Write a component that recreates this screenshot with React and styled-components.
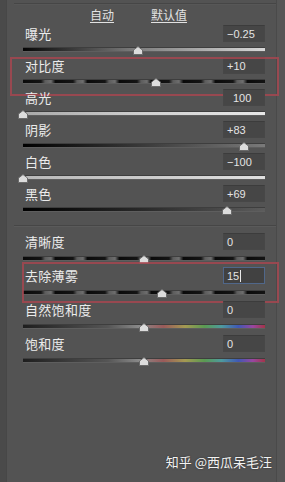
import React from "react";
import styled, { createGlobalStyle, css } from "styled-components";

const Global = createGlobalStyle`
  html, body { margin: 0; padding: 0; background: #535353; }
  body { font-family: "Noto Sans CJK SC", "Noto Sans", sans-serif; }
`;

const Panel = styled.div`
  position: relative;
  width: 285px;
  height: 482px;
  display: flex;
  background: #535353;
  overflow: hidden;
`;

const LeftEdge = styled.div`
  width: 6px;
  background: #4a4a4a;
  border-right: 1px solid #474747;
`;

const RightEdge = styled.div`
  width: 8px;
  background: #565656;
  border-left: 1px solid #4a4a4a;
`;

const Content = styled.div`
  flex: 1;
  display: flex;
  flex-direction: column;
  padding-top: 3px;
`;

const TopRule = styled.div`
  height: 1px;
  margin: 0 0 0 7px;
  background: #464646;
  border-bottom: 1px solid #575757;
`;

const Header = styled.div`
  height: 20px;
  display: flex;
  align-items: center;
  padding-left: 83px;
  gap: 37px;
`;

const HeaderLink = styled.span`
  font-size: 12px;
  line-height: 14px;
  color: #e2e2e2;
  text-decoration: underline;
  text-underline-offset: 2px;
`;

const Section = styled.div`
  display: flex;
  flex-direction: column;
`;

const Row = styled.div`
  position: relative;
  height: ${(p) => p.$h}px;
  padding: 0 11px 0 16px;
  display: flex;
  flex-direction: column;
  ${(p) =>
    p.$mark &&
    css`
      &::after {
        content: "";
        position: absolute;
        left: ${p.$mark.l}px;
        right: ${p.$mark.r}px;
        top: ${p.$mark.t}px;
        bottom: ${p.$mark.b}px;
        border: 2px solid rgba(170, 70, 80, 0.8);
        pointer-events: none;
      }
    `}
`;

const LabelLine = styled.div`
  height: 17px;
  display: flex;
  align-items: center;
  justify-content: space-between;
`;

const Label = styled.span`
  padding-left: 2px;
  font-size: 13px;
  line-height: 17px;
  color: #ebebeb;
  letter-spacing: 0.3px;
`;

const ValueBox = styled.div`
  box-sizing: border-box;
  width: 42px;
  height: 17px;
  padding-left: ${(p) => p.$indent || 3}px;
  display: flex;
  align-items: center;
  font-family: "Liberation Sans", Arial, sans-serif;
  font-size: 11px;
  color: #e4e4e4;
  background: ${(p) => (p.$focus ? "#414141" : "#464646")};
  border: 1px solid ${(p) => (p.$focus ? "#50678a" : "#474747")};
  border-top-color: ${(p) => (p.$focus ? "#50678a" : "#3c3c3c")};
`;

const Caret = styled.span`
  display: inline-block;
  width: 1px;
  height: 12px;
  margin-left: 1px;
  background: #e8e8e8;
`;

const SliderLine = styled.div`
  position: relative;
  flex: 1;
  padding-top: ${(p) => p.$offset}px;
`;

const trackBg = {
  exposure: "linear-gradient(to right, #050505 0%, #7a7a7a 45%, #d8d8d8 100%)",
  dashed:
    "repeating-linear-gradient(to right, #0a0a0a 0px, #141414 18px, #5c5c5c 22px, #6e6e6e 28px, #141414 32px)",
  highlights: "linear-gradient(to right, #a8a8a8 0%, #d0d0d0 50%, #e8e8e8 100%)",
  shadows: "linear-gradient(to right, #000 0%, #3a3a3a 50%, #7a7a7a 100%)",
  whites: "linear-gradient(to right, #b8b8b8 0%, #cfcfcf 60%, #e0e0e0 100%)",
  blacks: "linear-gradient(to right, #000 0%, #2a2a2a 50%, #5c5c5c 100%)",
  color:
    "linear-gradient(to right, #1e1e1e 0%, #555 35%, #8a8a8a 48%, #9a5a5a 58%, #a49a52 67%, #5a9a52 75%, #4e9a9e 82%, #4058b4 89%, #9a46a0 95%, #a33448 100%)",
};

const Track = styled.div`
  height: 3px;
  background: ${(p) => trackBg[p.$kind]};
  border-bottom: 1px solid #5e5e5e;
  box-shadow: 0 -1px 0 #3e3e3e;
`;

const Thumb = styled.svg`
  position: absolute;
  top: ${(p) => p.$top}px;
  width: 10px;
  height: 9px;
  margin-left: -5px;
`;

const Divider = styled.div`
  height: 1px;
  margin: 8px 0 6px 7px;
  background: #464646;
  border-bottom: 1px solid #5a5a5a;
`;

const Watermark = styled.div`
  position: absolute;
  right: 13px;
  bottom: 11px;
  font-size: 13px;
  color: #f2f2f2;
  text-shadow: 0 0 2px rgba(0, 0, 0, 0.5);
`;

const TRACK_W = 242;

function Slider({ value, min = -100, max = 100, kind, offset }) {
  const x = ((value - min) / (max - min)) * TRACK_W;
  return (
    <SliderLine $offset={offset}>
      <Track $kind={kind} />
      <Thumb
        $top={offset - 2}
        viewBox="0 0 10 9"
        style={{ left: x }}
      >
        <polygon
          points="5,0.5 9.5,4 9.5,8.5 0.5,8.5 0.5,4"
          fill="#dcdcdc"
          stroke="#6a6a6a"
          strokeWidth="1"
        />
      </Thumb>
    </SliderLine>
  );
}

function Control({ label, text, value, min, max, kind, h, offset, mark, focus, indent }) {
  return (
    <Row $h={h} $mark={mark}>
      <LabelLine>
        <Label>{label}</Label>
        <ValueBox $focus={focus} $indent={indent}>
          {text}
          {focus && <Caret />}
        </ValueBox>
      </LabelLine>
      <Slider value={value} min={min} max={max} kind={kind} offset={offset} />
    </Row>
  );
}

const tone = [
  { label: "曝光", text: "−0.25", value: -0.25, min: -5, max: 5, kind: "exposure" },
  { label: "对比度", text: "+10", value: 10, kind: "dashed", mark: { l: 3, r: -3, t: 0, b: -7 } },
  { label: "高光", text: "100", value: -100, kind: "highlights", indent: 9 },
  { label: "阴影", text: "+83", value: 83, kind: "shadows" },
  { label: "白色", text: "−100", value: -100, kind: "whites" },
  { label: "黑色", text: "+69", value: 69, kind: "blacks" },
];

const presence = [
  { label: "清晰度", text: "0", value: 0, kind: "dashed" },
  { label: "去除薄雾", text: "15", value: 15, kind: "dashed", focus: true, mark: { l: 15, r: -3, t: -5, b: -2 } },
  { label: "自然饱和度", text: "0", value: 0, kind: "color" },
  { label: "饱和度", text: "0", value: 0, kind: "color" },
];

export default function App() {
  return (
    <>
      <Global />
      <Panel>
        <LeftEdge />
        <Content>
          <TopRule />
          <Header>
            <HeaderLink>自动</HeaderLink>
            <HeaderLink>默认值</HeaderLink>
          </Header>
          <Section>
            {tone.map((c) => (
              <Control key={c.label} {...c} h={32} offset={6} />
            ))}
          </Section>
          <Divider />
          <Section>
            {presence.map((c) => (
              <Control key={c.label} {...c} h={34} offset={7} />
            ))}
          </Section>
        </Content>
        <RightEdge />
        <Watermark>知乎 @西瓜呆毛汪</Watermark>
      </Panel>
    </>
  );
}
